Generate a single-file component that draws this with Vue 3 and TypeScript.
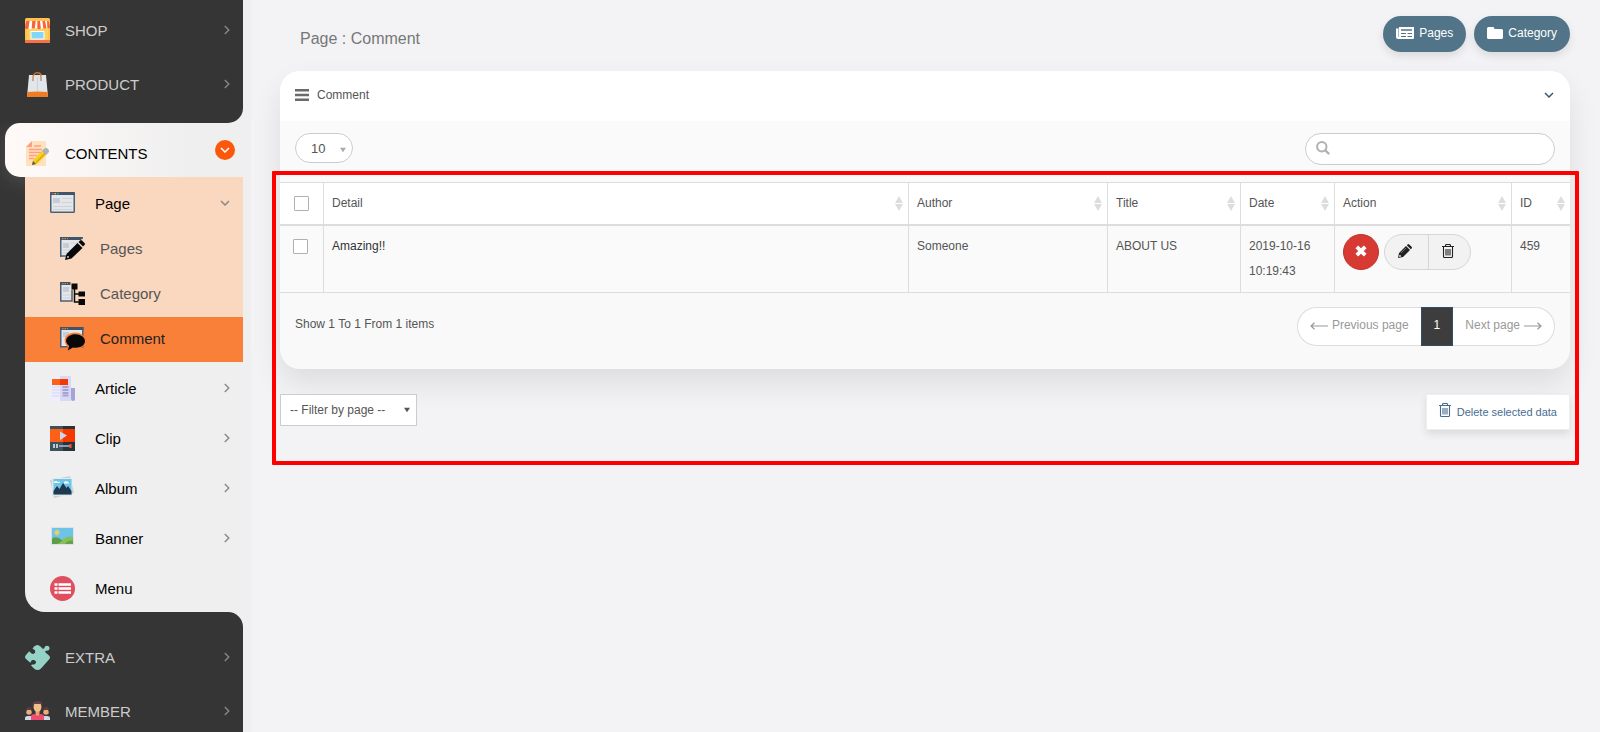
<script setup lang="ts">
import { ref } from 'vue'

interface NavItem {
  label: string
  icon: string
  arrow?: boolean
}

interface Column {
  key: string
  label: string
}

interface CommentRow {
  id: number
  detail: string
  author: string
  title: string
  date: string
  time: string
}

const topItems: NavItem[] = [
  { label: 'SHOP', icon: 'shop', arrow: true },
  { label: 'PRODUCT', icon: 'product', arrow: true },
]
const pageItems: NavItem[] = [
  { label: 'Pages', icon: 'pages' },
  { label: 'Category', icon: 'category' },
  { label: 'Comment', icon: 'comment' },
]
const contentItems: NavItem[] = [
  { label: 'Article', icon: 'article', arrow: true },
  { label: 'Clip', icon: 'clip', arrow: true },
  { label: 'Album', icon: 'album', arrow: true },
  { label: 'Banner', icon: 'banner', arrow: true },
  { label: 'Menu', icon: 'menu' },
]
const bottomItems: NavItem[] = [
  { label: 'EXTRA', icon: 'extra', arrow: true },
  { label: 'MEMBER', icon: 'member', arrow: true },
]

const columns: Column[] = [
  { key: 'detail', label: 'Detail' },
  { key: 'author', label: 'Author' },
  { key: 'title', label: 'Title' },
  { key: 'date', label: 'Date' },
  { key: 'action', label: 'Action' },
  { key: 'id', label: 'ID' },
]

const rows: CommentRow[] = [
  { id: 459, detail: 'Amazing!!', author: 'Someone', title: 'ABOUT US', date: '2019-10-16', time: '10:19:43' },
]

const activePage = ref('Comment')
const pageSize = ref('10')
const search = ref('')
const pageFilter = ref('all')
const selected = ref<number[]>([])

function toggleAll(event: Event): void {
  const checked = (event.target as HTMLInputElement).checked
  selected.value = checked ? rows.map((row) => row.id) : []
}
</script>

<template>
  <svg class="sprite" aria-hidden="true">
    <symbol id="i-shop" viewBox="0 0 25 25">
      <rect width="25" height="25" rx="1.5" fill="#ffc24c" />
      <rect x="2" y="10" width="21" height="13" fill="#ffd15c" />
      <path d="M1.500 3h22L25 8v2a1.800 1.800 0 0 1-25 0V8z" fill="none" />
      <path d="M4.500 3h2.800L7 9.500a1.800 1.800 0 0 1-3.600 0zM10.600 3h2L12.500 9.500a1.800 1.800 0 0 1-3 0zM15 3h2.500l.8 6.500a1.800 1.800 0 0 1-3.300 0zM20 3h2l.5 6.500a1.500 1.500 0 0 1-2 0z" fill="#fff" />
      <path d="M1.500 3h3L3.600 9.500a1.800 1.800 0 0 1-3.600 0V8zM7.300 3h3.300L9.900 9.500a1.800 1.800 0 0 1-3.200 0zM12.500 3H15l.8 6.500a1.700 1.700 0 0 1-3.400 0zM17.500 3H20l1.400 6.500a1.700 1.700 0 0 1-3.200 0zM22 3h1.500L25 8v1.500a1.600 1.600 0 0 1-2.600 0z" fill="#f8623f" />
      <rect x="5.500" y="13" width="14" height="8.500" fill="#fff" />
      <rect x="6.500" y="14" width="12" height="6.500" fill="#82d7ff" />
      <path d="M0 22h25v1.500a1.500 1.500 0 0 1-1.500 1.500h-22A1.500 1.500 0 0 1 0 23.500z" fill="#f8714b" />
    </symbol>
    <symbol id="i-product" viewBox="0 0 25 25">
      <path d="M4 3h17l2 22H2z" fill="#e1e6ea" />
      <path d="m2.400 20 9.600-.5h1l9.600.5.400 5H2z" fill="#ef7c22" />
      <path d="M12.500 5v14" stroke="#ccd3d8" />
      <path d="M8 9V5a4 4 0 0 1 8 0v4M8.500 3.500Q9.500.6 12.500.6T16.500 3.500" fill="none" stroke="#bd7339" stroke-width="1.100" />
    </symbol>
    <symbol id="i-contents" viewBox="0 0 25 25">
      <path d="M7 0h14v25H1V6z" fill="#ffe1bd" />
      <path d="M7 0v6H1z" fill="#ff9d85" />
      <path d="M9 5h7M4 8.500h13M4 11.500h12M4 14.500h8M4 17.500h5" stroke="#ff9d85" stroke-width="1.300" />
      <path d="m8 19 10-10 4 4-10 10-5 1z" fill="#f5d020" />
      <path d="m11 21.500 10-10" stroke="#d8a90d" stroke-width="1.500" />
      <path d="m17 10 3-3q4-.5 4 4l-3 3z" fill="#a9b1ba" />
      <path d="m7 24 1-4 3 3z" fill="#56535a" />
    </symbol>
    <symbol id="i-page" viewBox="0 0 25 21">
      <rect x=".75" y=".75" width="23.500" height="19.500" rx=".8" fill="#e3e7ea" stroke="#4d6078" stroke-width="1.500" />
      <path d="M0 1a1 1 0 0 1 1-1h23a1 1 0 0 1 1 1v2H0z" fill="#42546b" />
      <path d="M2 1.600h1.500" stroke="#e8574b" stroke-width="1.200" /><path d="M4.500 1.600H6" stroke="#f1c23e" stroke-width="1.200" /><path d="M7 1.600h1.500" stroke="#4ab36b" stroke-width="1.200" />
      <rect x="3" y="6" width="7" height="5" fill="#c7ccd6" />
      <path d="M12 6.500h10M12 10.500h10M3 14.500h19M3 17.500h19" stroke="#cdd3d8" />
    </symbol>
    <symbol id="i-pages" viewBox="0 0 25 24">
      <path d="M1 1h21l-1 3L9 20H1z" fill="#e3e7ea" />
      <path d="M.75 20V1H23M.75 19H8" fill="none" stroke="#4d6078" stroke-width="1.500" />
      <path d="M0 0h23l-2 3H0z" fill="#42546b" /><path d="M2 1.700h6" stroke="#d89b46" stroke-dasharray="1.500 1" />
      <rect x="3" y="6" width="6" height="5" fill="#c7ccd6" /><path d="M11 6h7M3 13h9M3 16h6" stroke="#cdd3d8" />
      <path d="m5 23 1.500-6L17.500 6l5 5-11 10.500z" fill="#080808" /><path d="m18.500 5 1.500-1.500q1-1 2 0l2.500 2.500q1 1 0 2L23 9.500z" fill="#080808" />
      <circle cx="8" cy="20" r=".9" fill="#ddd" />
    </symbol>
    <symbol id="i-category" viewBox="0 0 25 24">
      <path d="M.75 1H12v18H.75z" fill="#e3e7ea" stroke="#4d6078" stroke-width="1.500" /><path d="M0 0h11v3H0z" fill="#42546b" />
      <path d="M2 1.700h6" stroke="#d89b46" stroke-dasharray="1.500 1" /><rect x="3" y="5" width="6" height="5" fill="#c7ccd6" />
      <path d="M3 13h8M3 16h8" stroke="#cdd3d8" />
      <path d="M10.500 0H19v8h-3v14h-3V8h-2.500z" fill="#fad8bf" />
      <path d="M11.500 1.500h6v6h-6zM18.500 9.500H25v5h-6.500zM18.500 17H25v6h-6.500z" fill="#080808" />
      <path d="M14.500 7v13H19M14.500 12H19" fill="none" stroke="#080808" stroke-width="1.500" />
    </symbol>
    <symbol id="i-comment" viewBox="0 0 25 24">
      <rect x=".75" y=".75" width="22" height="19" fill="#e3e7ea" stroke="#4d6078" stroke-width="1.500" /><path d="M0 0h23.500v3H0z" fill="#42546b" />
      <path d="M2 1.700h6" stroke="#d89b46" stroke-dasharray="1.500 1" /><rect x="3" y="5" width="6" height="5" fill="#c7ccd6" />
      <path d="M15 5.500c6 0 10 3 10 8.500s-5 9-13 8l-5 3 1-5c-6-5-4-14.500 7-14.500z" fill="#f98039" />
      <path d="M15.500 7.200c5 0 9.500 3 9.500 6.800 0 5-6 7.500-12 6.500L7.700 23.500l1.500-4.500C3 14 7 7.200 15.500 7.200z" fill="#080808" />
    </symbol>
    <symbol id="i-article" viewBox="0 0 25 25">
      <path d="M0 0h10v25H0z" fill="#efeffc" /><path d="M10 0h11v25H10z" fill="#d9d9f7" />
      <path d="M21 12h4v11a2 2 0 0 1-4 0z" fill="#a4a3d4" /><path d="M2 3h8v6H2z" fill="#ff6019" /><path d="M10 3h8v6h-8z" fill="#f53a00" />
      <path d="M2 11h8M2 14h8M2 17h8M2 20h8" stroke="#d4d4f1" stroke-width="1.200" /><path d="M12.500 11h6M12.500 14h6M12.500 17h6M12.500 19.500h6" stroke="#a4a3d4" stroke-width="1.800" />
    </symbol>
    <symbol id="i-clip" viewBox="0 0 25 25">
      <path d="M0 0h13v25H0z" fill="#3c5459" /><path d="M13 0h12v25H13z" fill="#293438" />
      <path d="M0 3h13v13H0z" fill="#ff6019" /><path d="M13 3h12v13H13z" fill="#f53a00" />
      <path d="m10 5.500 7 4-7 4.500z" fill="#cfd4ed" /><path d="M4 18v4M7 18v4" stroke="#e0e3f4" stroke-width="1.600" /><path d="M9 20h12" stroke="#b1b8dc" stroke-width="1.500" /><path d="M20.500 18v4" stroke="#f5543a" stroke-width="2" />
    </symbol>
    <symbol id="i-album" viewBox="0 0 25 25">
      <path d="M0 4 20 0l4 17-20 5z" fill="#c9d0d7" /><path d="M2 2h20v18H2z" fill="#e4e8eb" /><path d="M3.500 3h18v15.500h-18z" fill="#6bc6e8" />
      <path d="m3.500 15 3.500-5 2.500 3L13 7l3.500 5 1.500-2 3.500 5v3.500h-18z" fill="#20394f" /><path d="M4 6q2-2 4 0 2-1 2 1H4zM14 6.500q1-2 3-1 2 0 2 2h-5z" fill="#fff" />
    </symbol>
    <symbol id="i-banner" viewBox="0 0 25 25">
      <path d="M1 1h23v18H1z" fill="#dce1e6" /><path d="M2 2h21v16H2z" fill="#6dc3e8" /><circle cx="7" cy="6.500" r="2.200" fill="#f4d35b" /><path d="M7 3v7M3.500 6.500h7M4.500 4l5 5M4.500 9l5-5" stroke="#e5cf79" stroke-width=".7" />
      <path d="M2 12.500q5-3 10 1.500v4H2z" fill="#609d4b" /><path d="M7 18q4-1 6-4.500 4-4 10-2.500v7z" fill="#86be58" /><path d="M15 18q2-4 8-3.500V18z" fill="#64a34e" />
    </symbol>
    <symbol id="i-menu" viewBox="0 0 25 25">
      <circle cx="12.500" cy="12.500" r="12.500" fill="#e04f5f" /><path d="M8.500 8.500H21M8.500 12.500H21M8.500 16.500H21M4.500 8.500h3M4.500 12.500h3M4.500 16.500h3" stroke="#fff" stroke-width="2.500" />
    </symbol>
    <symbol id="i-extra" viewBox="0 0 25 25">
      <path d="M9 1.500q3.500-3 6.500 0l2.500 2.500 1.500-1c0-3 5-3 5 .2 0 2.500-2.500 2.800-3.500 2.300L20 7l4 3.500q2 2 0 4L16 23.500q-3.500 3-7 0l-2.500-2.500c-1-1 .5-1.500 2-1.500 3.500-.5 3-4.500 0-4.500-3.500 0-2 3-3.500 2.500L1 14q-2-2 0-4l2.500-3q1-1 2 .5c1 2 4.500 2 4.700-.7.1-2-1.200-2.500-2.700-3z" fill="#94d3c5" />
    </symbol>
    <symbol id="i-member" viewBox="0 0 25 25">
      <circle cx="4" cy="13" r="2.800" fill="#e8ad79" /><circle cx="21" cy="13" r="2.800" fill="#e8ad79" /><path d="M1 13q-.5-5 3-5t3 5l-1-2H2zM18 13q-.5-5 3-5t3 5l-1-2h-4z" fill="#5b3a42" />
      <path d="M0 21v-2q0-2 3-2h3v4zM19 17h3q3 0 3 2v2h-6z" fill="#cfdae9" />
      <path d="M10.500 9h4v8h-4z" fill="#e3a26c" /><ellipse cx="12.500" cy="8" rx="4" ry="4.800" fill="#f2bd88" /><path d="M8 8Q6.500 2 12 2.500 18 1 17 8l-1-3H9z" fill="#64424a" />
      <path d="M6 21v-4q0-2 4-2l2.500 2.500L15 15q4 0 4 2v4z" fill="#f14c71" />
    </symbol>
    <symbol id="i-right" viewBox="0 0 6 10"><path d="m.8 1 4 4-4 4" fill="none" stroke="currentColor" stroke-width="1.400" /></symbol>
    <symbol id="i-down" viewBox="0 0 10 6"><path d="m1 1 4 4 4-4" fill="none" stroke="currentColor" stroke-width="1.500" /></symbol>
    <symbol id="i-trash" viewBox="0 0 12 14">
      <path d="M0 2.500h12M3.500 2.500V1.500q0-1 1-1h3q1 0 1 1v1M1.500 3v9.500q0 1 1 1h7q1 0 1-1V3M4 5v6.500M6 5v6.500M8 5v6.500" fill="none" stroke="currentColor" stroke-width="1.100" />
    </symbol>
    <symbol id="i-caret" viewBox="0 0 8 6"><path d="M0 0h8L4 6z" fill="currentColor" /></symbol>
  </svg>

  <div class="layout">
    <aside class="sidebar">
      <nav class="nav" aria-label="Main">
        <div class="dark dark-top">
          <a v-for="item in topItems" :key="item.label" class="nav-main" href="#">
            <svg class="icon25"><use :href="`#i-${item.icon}`" /></svg>
            <span class="nav-text">{{ item.label }}</span>
            <svg class="chev-right"><use href="#i-right" /></svg>
          </a>
        </div>
        <div class="open-group">
          <a class="contents" href="#">
            <svg class="icon25"><use href="#i-contents" /></svg>
            <span class="nav-text">CONTENTS</span>
            <span class="badge"><svg class="chev-down"><use href="#i-down" /></svg></span>
          </a>
          <div class="submenu">
            <div class="page-group">
              <a class="sub-item" href="#">
                <svg class="icon-page"><use href="#i-page" /></svg>
                <span class="nav-text">Page</span>
                <svg class="chev-down"><use href="#i-down" /></svg>
              </a>
              <a
                v-for="item in pageItems"
                :key="item.label"
                class="leaf"
                :class="{ active: item.label === activePage }"
                href="#"
                @click.prevent="activePage = item.label"
              >
                <svg class="icon-leaf"><use :href="`#i-${item.icon}`" /></svg>
                <span>{{ item.label }}</span>
              </a>
            </div>
            <a v-for="item in contentItems" :key="item.label" class="sub-item" href="#">
              <svg class="icon25"><use :href="`#i-${item.icon}`" /></svg>
              <span class="nav-text">{{ item.label }}</span>
              <svg v-if="item.arrow" class="chev-right"><use href="#i-right" /></svg>
            </a>
          </div>
        </div>
        <div class="dark dark-bottom">
          <a v-for="item in bottomItems" :key="item.label" class="nav-main" href="#">
            <svg class="icon25"><use :href="`#i-${item.icon}`" /></svg>
            <span class="nav-text">{{ item.label }}</span>
            <svg class="chev-right"><use href="#i-right" /></svg>
          </a>
        </div>
      </nav>
    </aside>

    <main class="main">
      <header class="page-head">
        <h1>Page : Comment</h1>
        <div class="head-actions">
          <button class="pill" type="button">
            <svg width="18" height="12" viewBox="0 0 18 12">
              <path d="M3 0h15v11q0 1-1 1H2q-2 0-2-2V1.500h3z" fill="#fff" />
              <path d="M2.500 2v8" stroke="#a9bbc5" /><path d="M5 3h11" stroke="#517488" stroke-width="1.500" /><path d="M5 6.500h5M11.500 6.500H16M5 9.500h5M11.500 9.500H16" stroke="#517488" />
            </svg>
            Pages
          </button>
          <button class="pill" type="button">
            <svg width="16" height="12" viewBox="0 0 16 12"><path d="M0 1.500Q0 0 1.500 0H6q1.500 0 1.500 2h7Q16 2 16 3.500v7q0 1.500-1.500 1.500h-13Q0 12 0 10.500z" fill="#fff" /></svg>
            Category
          </button>
        </div>
      </header>

      <div class="workspace">
        <section class="card">
          <div class="card-head">
            <svg width="14" height="12" viewBox="0 0 14 12"><path d="M0 1.300h14M0 6h14M0 10.700h14" stroke="#6b6b6b" stroke-width="2.500" /></svg>
            <h2>Comment</h2>
            <button class="collapse" type="button" aria-label="Collapse"><svg class="chev-down"><use href="#i-down" /></svg></button>
          </div>
          <div class="toolbar">
            <div class="select-wrap">
              <select v-model="pageSize" class="size-select" aria-label="Items shown">
                <option>10</option>
                <option>25</option>
                <option>50</option>
              </select>
              <svg class="caret caret-light"><use href="#i-caret" /></svg>
            </div>
            <label class="search">
              <svg width="14" height="14" viewBox="0 0 14 14"><circle cx="5.800" cy="5.800" r="4.700" fill="none" stroke="#b0b0b0" stroke-width="2" /><path d="m9.500 9.500 3 3" stroke="#b0b0b0" stroke-width="2.400" stroke-linecap="round" /></svg>
              <input v-model="search" type="search" aria-label="Search comments" />
            </label>
          </div>
          <table class="table">
            <colgroup>
              <col class="c-check" /><col /><col class="c-author" /><col class="c-title" /><col class="c-date" /><col class="c-action" /><col class="c-id" />
            </colgroup>
            <thead>
              <tr>
                <th class="check"><input type="checkbox" aria-label="Select all" :checked="selected.length === rows.length" @change="toggleAll" /></th>
                <th v-for="col in columns" :key="col.key" scope="col">
                  <div class="th">
                    {{ col.label }}
                    <svg width="8" height="15" viewBox="0 0 8 15"><path d="M4 0l4 7H0zM4 15 0 8h8z" fill="#ddd" /></svg>
                  </div>
                </th>
              </tr>
            </thead>
            <tbody>
              <tr v-for="row in rows" :key="row.id">
                <td class="check"><input v-model="selected" type="checkbox" :value="row.id" :aria-label="`Select ${row.detail}`" /></td>
                <td class="strong">{{ row.detail }}</td>
                <td>{{ row.author }}</td>
                <td>{{ row.title }}</td>
                <td>{{ row.date }}<br />{{ row.time }}</td>
                <td>
                  <div class="actions">
                    <button class="reject" type="button" aria-label="Reject">
                      <svg width="12" height="12" viewBox="0 0 12 12"><path d="m1.800 1.800 8.400 8.400M10.200 1.800l-8.400 8.400" stroke="#fff" stroke-width="3.800" /></svg>
                    </button>
                    <div class="btn-group">
                      <button type="button" aria-label="Edit">
                        <svg width="14" height="14" viewBox="0 0 14 14"><path d="m0 14 1-5L8 2l4 4-7 7zM8.800 1.200 9.600.4q.8-.8 1.600 0l2.400 2.400q.8.800 0 1.600l-.8.800z" fill="#222" /><path d="m3 9 5-5" stroke="#999" stroke-width=".7" /><circle cx="2" cy="12" r=".9" fill="#eee" /></svg>
                      </button>
                      <button type="button" aria-label="Delete"><svg class="trash"><use href="#i-trash" /></svg></button>
                    </div>
                  </div>
                </td>
                <td>{{ row.id }}</td>
              </tr>
            </tbody>
          </table>
          <footer class="card-foot">
            <p>Show 1 To 1 From 1 items</p>
            <nav class="pager" aria-label="Pagination">
              <button class="prev" type="button" disabled>
                <svg width="18" height="8" viewBox="0 0 18 8"><path d="M1 4h17M4.500.8 1 4l3.500 3.200" fill="none" stroke="#999" stroke-width="1.200" /></svg>
                Previous page
              </button>
              <button class="current" type="button" aria-current="page">1</button>
              <button class="next" type="button" disabled>
                Next page
                <svg width="18" height="8" viewBox="0 0 18 8"><path d="M0 4h17M13.500.8 17 4l-3.500 3.200" fill="none" stroke="#999" stroke-width="1.200" /></svg>
              </button>
            </nav>
          </footer>
        </section>

        <div class="below">
          <div class="select-wrap">
            <select v-model="pageFilter" class="filter-select" aria-label="Filter by page">
              <option value="all">-- Filter by page --</option>
              <option value="about">ABOUT US</option>
            </select>
            <svg class="caret"><use href="#i-caret" /></svg>
          </div>
          <button class="delete" type="button"><svg class="trash"><use href="#i-trash" /></svg>Delete selected data</button>
        </div>
        <div class="highlight"></div>
      </div>
    </main>
  </div>
</template>

<style>
body {
  background: #f3f3f6;
}
</style>

<style scoped>
* {
  box-sizing: border-box;
}
.sprite {
  position: absolute;
  width: 0;
  height: 0;
}
.layout {
  display: flex;
  height: 100vh;
  overflow: hidden;
  background: #f3f3f6;
  color: #555;
  font: 12px/25px "Liberation Sans", Arial, sans-serif;
}
button,
select,
input {
  margin: 0;
  color: inherit;
  font: inherit;
}
button {
  cursor: pointer;
}
svg {
  flex: none;
}
.sidebar {
  flex: none;
  width: 251px;
  overflow: hidden;
  background: #efefef;
}
.nav {
  font-size: 15px;
}
.nav a {
  display: flex;
  align-items: center;
  color: #000;
  text-decoration: none;
}
.nav-text {
  flex: 1;
}
.dark {
  margin-right: 8px;
  background: #353535;
}
.dark-top {
  padding: 3px 0 12px;
  border-bottom-right-radius: 15px;
}
.dark-bottom {
  padding-top: 18px;
  border-top-right-radius: 15px;
}
.nav .nav-main {
  gap: 15px;
  height: 54px;
  padding: 0 13px 0 25px;
  color: #ccc;
}
.icon25 {
  width: 25px;
  height: 25px;
}
.chev-right {
  width: 6px;
  height: 10px;
  color: #888;
}
.chev-down {
  display: block;
  width: 10px;
  height: 6px;
  color: #888;
}
.open-group {
  overflow: hidden;
  background: #353535;
}
.nav .contents {
  gap: 15px;
  height: 54px;
  margin-left: 5px;
  padding: 6px 16px 0 20px;
  border-radius: 15px 0 0 15px;
  background: linear-gradient(to right, #fffaf8, #efefef 75%);
  box-shadow: 0 5px 20px rgba(255, 255, 255, 0.12);
}
.badge {
  display: flex;
  align-items: center;
  justify-content: center;
  width: 20px;
  height: 20px;
  margin-bottom: 6px;
  border-radius: 50%;
  background: #fc580c;
}
.badge .chev-down {
  color: #fff;
}
.submenu {
  position: relative;
  margin-left: 25px;
  padding-right: 8px;
  border-bottom-left-radius: 20px;
  background: #efefef;
}
.page-group {
  background: #fad8bf;
}
.nav .sub-item {
  gap: 20px;
  height: 50px;
  padding: 2px 13px 0 25px;
}
.icon-page {
  width: 25px;
  height: 21px;
  margin-bottom: 2px;
}
.nav .leaf {
  gap: 15px;
  height: 45px;
  padding: 0 0 2px 35px;
  color: #555;
}
.nav .leaf.active {
  background: #f98039;
  color: #222;
}
.icon-leaf {
  width: 25px;
  height: 24px;
}
.main {
  flex: 1;
  min-width: 0;
  padding: 16px 30px 0 29px;
}
.page-head {
  display: flex;
  justify-content: space-between;
  height: 55px;
  padding-left: 20px;
}
h1 {
  margin: 10px 0 0;
  color: #777;
  font-size: 16px;
  font-weight: 400;
}
.head-actions {
  display: flex;
  align-items: flex-start;
  gap: 8px;
}
.pill {
  display: flex;
  align-items: center;
  gap: 5px;
  height: 36px;
  padding: 0 13px 2px;
  border: 0;
  border-radius: 18px;
  background: #517488;
  box-shadow: 0 4px 8px rgba(0, 0, 0, 0.1);
  color: #fff;
}
.workspace {
  position: relative;
}
.card {
  overflow: hidden;
  border-radius: 20px;
  background: #f9f9f9;
  box-shadow: 0 15px 30px rgba(0, 0, 0, 0.09);
}
.card-head {
  display: flex;
  align-items: center;
  gap: 8px;
  height: 50px;
  padding: 0 16px 2px 15px;
  background: #fff;
}
h2 {
  flex: 1;
  margin: 0;
  font-size: 12px;
  font-weight: 400;
}
.collapse {
  padding: 0;
  border: 0;
  background: none;
}
.collapse .chev-down {
  color: #3c5870;
}
.toolbar {
  display: flex;
  align-items: flex-start;
  justify-content: space-between;
  height: 61px;
  padding: 12px 15px 0;
  background: #fafafa;
}
.select-wrap {
  position: relative;
}
select {
  display: block;
  appearance: none;
  border: 1px solid #ccc;
  background: #fff;
}
.size-select {
  width: 58px;
  height: 30px;
  padding: 0 15px;
  border-radius: 15px;
  font-size: 13px;
}
.caret {
  position: absolute;
  top: 13px;
  right: 7px;
  width: 6px;
  height: 6px;
  pointer-events: none;
}
.caret-light {
  top: 14px;
  color: #aaa;
}
.search {
  display: flex;
  align-items: center;
  gap: 8px;
  width: 250px;
  height: 32px;
  padding: 0 12px 2px 10px;
  border: 1px solid #ccc;
  border-radius: 16px;
  background: #fff;
}
.search input {
  flex: 1;
  min-width: 0;
  padding: 0;
  border: 0;
  outline: 0;
  background: transparent;
}
.table {
  width: 100%;
  border-spacing: 0;
  table-layout: fixed;
}
.c-check {
  width: 44px;
}
.c-author {
  width: 199px;
}
.c-title {
  width: 133px;
}
.c-date {
  width: 94px;
}
.c-action {
  width: 177px;
}
.c-id {
  width: 58px;
}
th,
td {
  padding: 8px;
  border-right: 1px solid #ddd;
  text-align: left;
  vertical-align: top;
  font-weight: 400;
}
th:last-child,
td:last-child {
  border-right: 0;
}
th {
  border-top: 1px solid #ddd;
  border-bottom: 2px solid #ddd;
  background: #fff;
}
td {
  border-bottom: 1px solid #ddd;
  background: #fafafa;
}
.strong {
  color: #333;
}
.th {
  display: flex;
  align-items: center;
  justify-content: space-between;
  margin-right: -3px;
}
.check {
  padding: 13px 14px 0;
}
td.check {
  padding-left: 13px;
}
.check input {
  display: block;
  width: 15px;
  height: 15px;
  appearance: none;
  border: 1px solid #b0b0b0;
  border-radius: 1px;
  background: #fff;
}
.check input:checked {
  background: #517488;
}
.actions {
  display: flex;
  gap: 5px;
}
.reject {
  display: flex;
  align-items: center;
  justify-content: center;
  width: 36px;
  height: 36px;
  padding: 0 0 2px;
  border: 1px solid #c33229;
  border-radius: 50%;
  background: #d63a33;
}
.btn-group {
  display: flex;
  height: 36px;
  border: 1px solid #d5d5d5;
  border-radius: 18px;
  background: #f2f2f2;
}
.btn-group button {
  display: flex;
  align-items: center;
  justify-content: center;
  width: 41px;
  padding: 0 3px 2px 0;
  border: 0;
  background: none;
  color: #222;
}
.btn-group button:first-child {
  width: 44px;
  border-right: 1px solid #d5d5d5;
}
.trash {
  width: 12px;
  height: 14px;
}
.card-foot {
  display: flex;
  align-items: flex-start;
  justify-content: space-between;
  height: 76px;
  padding: 14px 15px 0;
}
p {
  margin: 5px 0 0;
}
.pager {
  display: flex;
  height: 39px;
}
.pager button {
  display: flex;
  align-items: center;
  gap: 4px;
  padding: 0 12px 2px;
  border: 1px solid #ddd;
  background: #fff;
  color: #999;
}
.pager .prev {
  border-right: 0;
  border-radius: 20px 0 0 20px;
}
.pager .next {
  border-left: 0;
  border-radius: 0 20px 20px 0;
}
.pager .current {
  border-color: #2e4d6b;
  background: #3d3d3d;
  color: #fff;
}
.below {
  display: flex;
  align-items: flex-start;
  justify-content: space-between;
  padding-top: 25px;
}
.filter-select {
  width: 137px;
  height: 32px;
  padding: 0 9px;
}
.delete {
  display: flex;
  align-items: center;
  gap: 6px;
  height: 36px;
  padding: 0 12px;
  border: 1px solid #eee;
  background: #fff;
  box-shadow: 0 4px 8px rgba(0, 0, 0, 0.1);
  color: #486c91;
  font-size: 11px;
}
.delete .trash {
  margin-bottom: 4px;
}
.highlight {
  position: absolute;
  top: 100px;
  right: -9px;
  left: -8px;
  height: 294px;
  border: 4px solid #f00;
  border-radius: 1px;
  pointer-events: none;
}
</style>
